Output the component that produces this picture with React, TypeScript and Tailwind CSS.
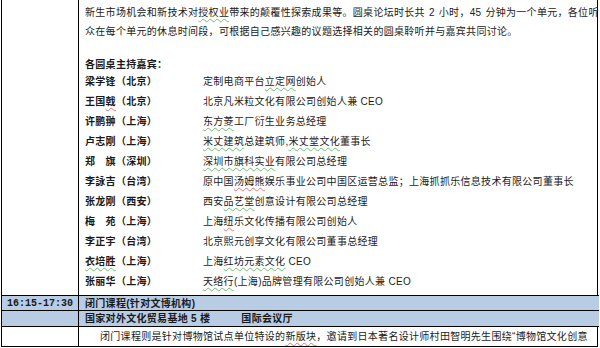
import React from 'react';

const hosts: { name: React.ReactNode; title: React.ReactNode }[] = [
  { name: '梁学锋（北京）', title: <>定制电商平台<G>立定网</G>创始人</> },
  { name: <>王国<R>戟</R>（北京）</>, title: '北京凡米粒文化有限公司创始人兼 CEO' },
  { name: '许鹏翀（上海）', title: <><G>东方菱</G>工厂衍生业务总经理</> },
  { name: '卢志刚（上海）', title: <><G>米丈建筑</G>总建筑师,<G>米丈堂文化</G>董事长</> },
  { name: '郑　旗（深圳）', title: <><G>深圳市旗科实业</G>有限公司总经理</> },
  { name: '李詠吉（台湾）', title: <>原中国<R>汤姆熊</R>娱乐事业公司中国区运营总监；上海抓抓乐信息技术有限公司董事长</> },
  { name: '张龙刚（西安）', title: <>西安<G>品艺堂</G>创意设计有限公司总经理</> },
  { name: '梅　苑（上海）', title: <>上海<R>纽</R>乐文化传播有限公司创始人</> },
  { name: '李正宇（台湾）', title: '北京熙元创享文化有限公司董事总经理' },
  { name: <><G>衣培胜</G>（上海）</>, title: <>上海<G>红坊元素文化</G> CEO</> },
  { name: '张丽华（上海）', title: <><G>天络行</G>(上海)品牌管理有限公司创始人兼 CEO</> },
];

// spell-check squiggles, kept thin like the original document
function G({ children }: { children: React.ReactNode }) {
  return (
    <span className="underline decoration-wavy decoration-1 decoration-[#6fbf73] underline-offset-2">{children}</span>
  );
}

function R({ children }: { children: React.ReactNode }) {
  return (
    <span className="underline decoration-wavy decoration-1 decoration-[#e57373] underline-offset-2">{children}</span>
  );
}

export default function App() {
  return (
    <div className="w-[600px] h-[348px] bg-white overflow-hidden font-['Liberation_Sans','Noto_Sans_CJK_SC',sans-serif] text-[10px] text-[#1a1a1a] tracking-[0.3px]">
      <div className="ml-px w-[597px] h-[347px] border-l border-r border-b border-black grid grid-cols-[77px_1fr] grid-rows-[295px_15px_16px_20px]">
        {/* top block: forum description + host list */}
        <div className="border-r border-black" />
        <div className="pl-[6px] pt-[3px] whitespace-nowrap">
          <div className="leading-[19px]">
            新生市场机会和新技术对<G>授权业</G>带来的颠覆性探索成果等。圆桌论坛时长共<span className="px-[4px]">2</span>小时，45<span className="pl-[4px]" />分钟为一个单元，各位听
          </div>
          <div className="leading-[19px]">
            众在每个单元的休息时间段，可根据自己感兴趣的议题选择相关的圆桌聆听并与嘉宾共同讨论。
          </div>
          <div className="h-[17px]" />
          <div className="leading-[14px] font-bold">各圆桌主持嘉宾：</div>
          {hosts.map((h, i) => (
            <div key={i} className="flex h-[20px] leading-[20px]">
              <div className="w-[118px] font-bold">{h.name}</div>
              <div>{h.title}</div>
            </div>
          ))}
        </div>

        {/* session header rows */}
        <div className="border-t border-r border-black bg-[#b8cce4] flex items-center pl-[5px] font-['Liberation_Mono',monospace] font-bold tracking-normal">
          16:15-17:30
        </div>
        <div className="border-t border-black bg-[#b8cce4] flex items-center pl-[6px] font-bold">
          闭门课程(针对文博机构)
        </div>
        <div className="border-t border-r border-black bg-[#b8cce4]" />
        <div className="border-t border-black bg-[#b8cce4] flex items-center pl-[6px] font-bold whitespace-nowrap">
          <span>国家对外文化贸易基地 5 楼</span>
          <span className="ml-[31px]">国际会议厅</span>
        </div>

        {/* description row */}
        <div className="border-t border-r border-black" />
        <div className="border-t border-black flex items-center pl-[21px] whitespace-nowrap overflow-hidden">
          闭门课程则是针对博物馆试点单位特设的<R>新版块</R>，邀请到日本著名设计师村田智明先生围绕“博物馆文化创意
        </div>
      </div>
    </div>
  );
}
